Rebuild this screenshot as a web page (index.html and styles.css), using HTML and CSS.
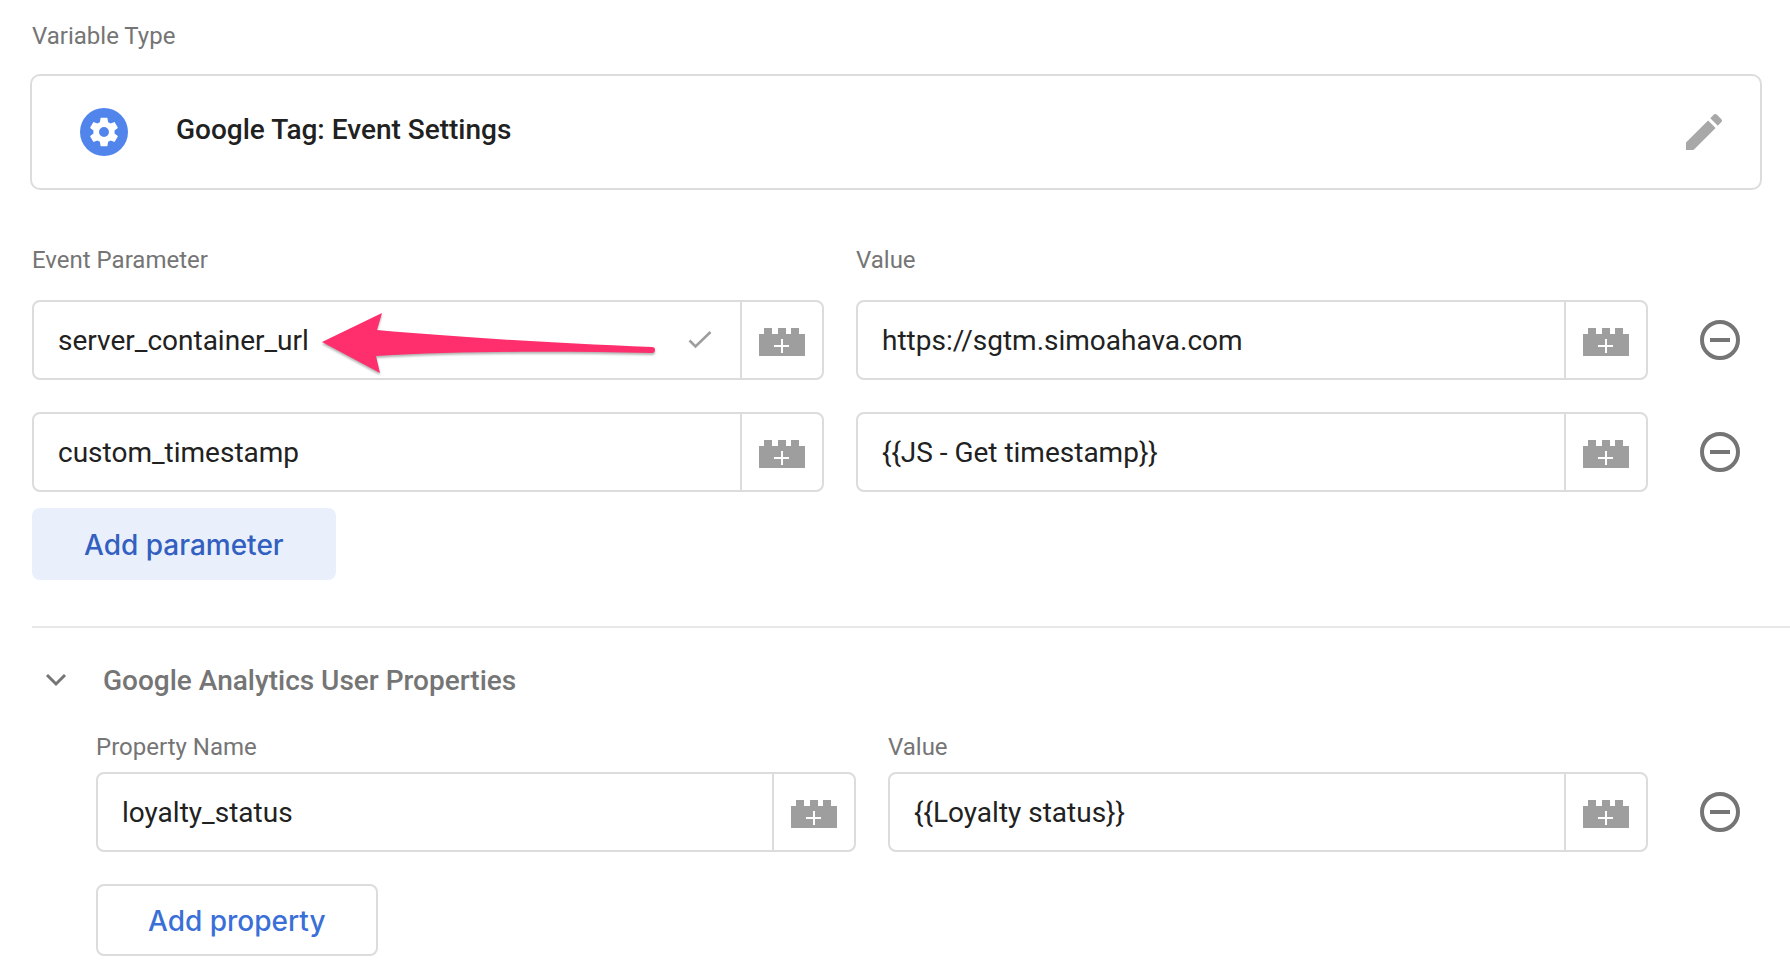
FILE: index.html
```html
<!DOCTYPE html>
<html lang="en">
<head>
<meta charset="utf-8">
<title>Google Tag: Event Settings</title>
<link rel="stylesheet" href="styles.css">
</head>
<body>
<svg class="sprite" aria-hidden="true">
  <symbol id="brick" viewBox="0 0 46 28">
    <path fill="#9e9e9e" d="M0 6h5V0h8v6h6V0h8v6h5V0h8v6h6v22H0z"/>
    <path stroke="#fff" stroke-width="2" d="M15 18h15M23 11v14"/>
  </symbol>
  <symbol id="minus" viewBox="0 0 40 40">
    <circle cx="20" cy="20" r="18" fill="none" stroke="#757575" stroke-width="4"/>
    <path stroke="#757575" stroke-width="4" d="M10 20h20"/>
  </symbol>
</svg>
<main class="page">
  <h1 class="label">Variable Type</h1>
  <section class="type-card">
    <span class="type-icon">
      <svg width="34" height="34" viewBox="0 0 24 24" aria-hidden="true"><path fill="#fff" d="M19.43 12.98c.04-.32.07-.64.07-.98s-.03-.66-.07-.98l2.11-1.65c.19-.15.24-.42.12-.64l-2-3.46c-.12-.22-.39-.3-.61-.22l-2.49 1c-.52-.4-1.08-.73-1.69-.98l-.38-2.65A.49.49 0 0 0 14 2h-4c-.25 0-.46.18-.49.42l-.38 2.65c-.61.25-1.17.59-1.69.98l-2.49-1c-.23-.09-.49 0-.61.22l-2 3.46c-.13.22-.07.49.12.64l2.11 1.65c-.04.32-.07.65-.07.98s.03.66.07.98l-2.11 1.65c-.19.15-.24.42-.12.64l2 3.46c.12.22.39.3.61.22l2.49-1c.52.4 1.08.73 1.69.98l.38 2.65c.03.24.24.42.49.42h4c.25 0 .46-.18.49-.42l.38-2.65c.61-.25 1.17-.59 1.69-.98l2.49 1c.23.09.49 0 .61-.22l2-3.46c.12-.22.07-.49-.12-.64l-2.11-1.65zM12 15.5a3.5 3.5 0 1 1 0-7 3.5 3.5 0 0 1 0 7z"/></svg>
    </span>
    <h2 class="type-name">Google Tag: Event Settings</h2>
    <button class="icon-button" type="button" aria-label="Edit variable type">
      <svg width="48" height="48" viewBox="0 0 24 24" aria-hidden="true"><path fill="#a8a8a8" d="M3 17.25V21h3.75L17.81 9.94l-3.75-3.75L3 17.25zM20.71 7.04a1 1 0 0 0 0-1.41l-2.34-2.34a1 1 0 0 0-1.41 0l-1.83 1.83 3.75 3.75 1.83-1.83z"/></svg>
    </button>
  </section>

  <section class="parameters">
    <div class="row">
      <label class="label" for="param-1">Event Parameter</label>
      <label class="label" for="value-1">Value</label>
    </div>
    <div class="row">
      <div class="field">
        <input class="input" id="param-1" type="text" value="server_container_url">
        <svg class="check" width="24" height="20" viewBox="0 0 24 20" aria-hidden="true"><path fill="none" stroke="#9e9e9e" stroke-width="2.6" d="M1.500 10.500l6 6L22.500 2"/></svg>
        <button class="addon" type="button" aria-label="Insert variable"><svg width="46" height="28"><use href="#brick"/></svg></button>
        <svg class="arrow" width="344" height="72" viewBox="0 0 344 72" aria-hidden="true"><path fill="#ff2e6c" d="M0 33L60 4l-5 17c80 7 170 13 275 17a3 3 0 0 1 0 6c-95-2-190-2-276 3l4 17z"/></svg>
      </div>
      <div class="field">
        <input class="input" id="value-1" type="text" value="https://sgtm.simoahava.com">
        <button class="addon" type="button" aria-label="Insert variable"><svg width="46" height="28"><use href="#brick"/></svg></button>
      </div>
      <button class="icon-button remove" type="button" aria-label="Remove parameter"><svg width="40" height="40"><use href="#minus"/></svg></button>
    </div>
    <div class="row">
      <div class="field">
        <input class="input" type="text" aria-label="Event Parameter" value="custom_timestamp">
        <button class="addon" type="button" aria-label="Insert variable"><svg width="46" height="28"><use href="#brick"/></svg></button>
      </div>
      <div class="field">
        <input class="input" type="text" aria-label="Value" value="{{JS - Get timestamp}}">
        <button class="addon" type="button" aria-label="Insert variable"><svg width="46" height="28"><use href="#brick"/></svg></button>
      </div>
      <button class="icon-button remove" type="button" aria-label="Remove parameter"><svg width="40" height="40"><use href="#minus"/></svg></button>
    </div>
    <button class="button button-tonal" type="button">Add parameter</button>
  </section>

  <section class="properties">
    <h2 class="section-title">
      <button class="toggle" type="button" aria-expanded="true">
        <svg width="22" height="16" viewBox="0 0 22 16" aria-hidden="true"><path fill="none" stroke="#757575" stroke-width="3" d="M2 2l9 9 9-9"/></svg>
        Google Analytics User Properties
      </button>
    </h2>
    <div class="properties-body">
      <div class="row">
        <label class="label" for="prop-1">Property Name</label>
        <label class="label" for="prop-value-1">Value</label>
      </div>
      <div class="row">
        <div class="field">
          <input class="input" id="prop-1" type="text" value="loyalty_status">
          <button class="addon" type="button" aria-label="Insert variable"><svg width="46" height="28"><use href="#brick"/></svg></button>
        </div>
        <div class="field">
          <input class="input" id="prop-value-1" type="text" value="{{Loyalty status}}">
          <button class="addon" type="button" aria-label="Insert variable"><svg width="46" height="28"><use href="#brick"/></svg></button>
        </div>
        <button class="icon-button remove" type="button" aria-label="Remove property"><svg width="40" height="40"><use href="#minus"/></svg></button>
      </div>
      <button class="button button-outlined" type="button">Add property</button>
    </div>
  </section>
</main>
</body>
</html>
```
FILE: styles.css
```css
* { box-sizing: border-box; }

body {
  margin: 0;
  background: #fff;
  color: #212121;
  font-family: Roboto, "Liberation Sans", sans-serif;
}

h1, h2 { margin: 0; }
svg { display: block; flex: none; }
button { cursor: pointer; font-family: inherit; }

.sprite { position: absolute; width: 0; height: 0; }

.page { padding: 20px 0 16px 32px; }

.label {
  color: #757575;
  font-size: 24px;
  font-weight: 400;
  line-height: 32px;
}

.type-card {
  display: flex;
  align-items: center;
  gap: 48px;
  margin: 22px 28px 0 -2px;
  padding: 32px 32px 32px 48px;
  border: 2px solid #dcdcdc;
  border-radius: 10px;
}

.type-icon {
  display: flex;
  align-items: center;
  justify-content: center;
  width: 48px;
  height: 48px;
  border-radius: 50%;
  background: #5185ec;
}

.type-name {
  flex: 1;
  padding-bottom: 4px;
  font-size: 28px;
  font-weight: 500;
  line-height: 36px;
}

.icon-button {
  display: flex;
  align-items: center;
  padding: 0;
  border: 0;
  background: none;
}

.parameters {
  display: flex;
  flex-direction: column;
  gap: 32px;
  padding: 54px 28px 46px 0;
}

.parameters .row:first-child { margin-bottom: -8px; }

.row {
  display: grid;
  grid-template-columns: 1fr 1fr 82px;
  gap: 32px;
  align-items: center;
}

.field {
  position: relative;
  display: flex;
  height: 80px;
  border: 2px solid #dcdcdc;
  border-radius: 8px;
}

.input {
  flex: 1;
  min-width: 0;
  padding: 0 24px;
  border: 0;
  outline: 0;
  background: none;
  color: #212121;
  font-family: inherit;
  font-size: 28px;
}

.check { align-self: center; margin-right: 28px; }

.addon {
  display: flex;
  align-items: center;
  justify-content: center;
  width: 82px;
  padding: 4px 0 0;
  border: 0;
  border-left: 2px solid #dcdcdc;
  background: none;
}

.arrow {
  position: absolute;
  top: 7px;
  left: 288px;
  filter: drop-shadow(0 2px 1px rgba(0, 0, 0, 0.3));
  pointer-events: none;
}

.remove { padding-left: 20px; }

.button {
  align-self: flex-start;
  height: 72px;
  padding: 2px 50px 0;
  border: 2px solid transparent;
  border-radius: 8px;
  font-family: Inter, Roboto, sans-serif;
  font-size: 28px;
  font-weight: 500;
}

.button-tonal {
  margin-top: -16px;
  background: #e9f0fc;
  color: #325fc0;
}

.button-outlined {
  margin-top: 32px;
  border-color: #dcdcdc;
  background: #fff;
  color: #3b6fd8;
}

.properties { border-top: 2px solid #e8e8e8; }

.section-title { padding-top: 35px; line-height: 36px; }

.toggle {
  display: flex;
  align-items: center;
  gap: 36px;
  padding: 0 0 0 13px;
  border: 0;
  background: none;
  color: #757575;
  font-size: 28px;
  font-weight: 500;
  line-height: 36px;
}

.properties-body { padding: 32px 28px 0 64px; }
.properties-body .row + .row { margin-top: 9px; }
```
